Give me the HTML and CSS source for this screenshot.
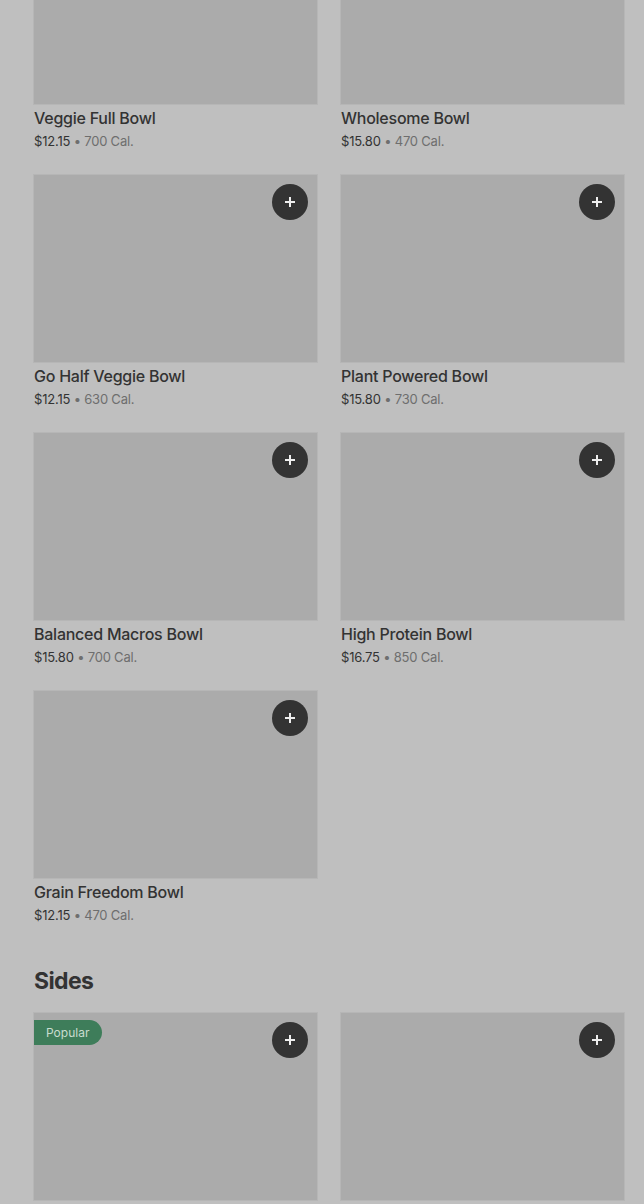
FILE: index.html
```html
<!DOCTYPE html>
<html>
<head>
<meta charset="utf-8">
<link rel="stylesheet" href="styles.css">
</head>
<body>
<main class="page">
  <section class="grid first">
    <article class="card">
      <div class="thumb"></div>
      <h3 class="name">Veggie Full Bowl</h3>
      <p class="meta"><span class="price">$12.15</span> • 700 Cal.</p>
    </article>
    <article class="card">
      <div class="thumb"></div>
      <h3 class="name">Wholesome Bowl</h3>
      <p class="meta"><span class="price">$15.80</span> • 470 Cal.</p>
    </article>
    <article class="card">
      <div class="thumb"><button class="add"><svg viewBox="0 0 12 12" width="12" height="12"><path d="M6 1v10M1 6h10" stroke="currentColor" stroke-width="2"/></svg></button></div>
      <h3 class="name">Go Half Veggie Bowl</h3>
      <p class="meta"><span class="price">$12.15</span> • 630 Cal.</p>
    </article>
    <article class="card">
      <div class="thumb"><button class="add"><svg viewBox="0 0 12 12" width="12" height="12"><path d="M6 1v10M1 6h10" stroke="currentColor" stroke-width="2"/></svg></button></div>
      <h3 class="name">Plant Powered Bowl</h3>
      <p class="meta"><span class="price">$15.80</span> • 730 Cal.</p>
    </article>
    <article class="card">
      <div class="thumb"><button class="add"><svg viewBox="0 0 12 12" width="12" height="12"><path d="M6 1v10M1 6h10" stroke="currentColor" stroke-width="2"/></svg></button></div>
      <h3 class="name">Balanced Macros Bowl</h3>
      <p class="meta"><span class="price">$15.80</span> • 700 Cal.</p>
    </article>
    <article class="card">
      <div class="thumb"><button class="add"><svg viewBox="0 0 12 12" width="12" height="12"><path d="M6 1v10M1 6h10" stroke="currentColor" stroke-width="2"/></svg></button></div>
      <h3 class="name">High Protein Bowl</h3>
      <p class="meta"><span class="price">$16.75</span> • 850 Cal.</p>
    </article>
    <article class="card">
      <div class="thumb"><button class="add"><svg viewBox="0 0 12 12" width="12" height="12"><path d="M6 1v10M1 6h10" stroke="currentColor" stroke-width="2"/></svg></button></div>
      <h3 class="name">Grain Freedom Bowl</h3>
      <p class="meta"><span class="price">$12.15</span> • 470 Cal.</p>
    </article>
  </section>

  <h2 class="section-title">Sides</h2>

  <section class="grid">
    <article class="card">
      <div class="thumb"><span class="badge">Popular</span><button class="add"><svg viewBox="0 0 12 12" width="12" height="12"><path d="M6 1v10M1 6h10" stroke="currentColor" stroke-width="2"/></svg></button></div>
    </article>
    <article class="card">
      <div class="thumb"><button class="add"><svg viewBox="0 0 12 12" width="12" height="12"><path d="M6 1v10M1 6h10" stroke="currentColor" stroke-width="2"/></svg></button></div>
    </article>
  </section>
</main>
</body>
</html>
```

FILE: styles.css
```css
html, body {
  margin: 0;
  padding: 0;
  background: #bfbfbf;
  height: 1204px;
  overflow: hidden;
}
body {
  font-family: Inter, "Noto Sans", sans-serif;
  color: #333333;
}
.page {
  padding: 0 20px 0 34px;
}
.grid {
  display: grid;
  grid-template-columns: 283px 283px;
  column-gap: 24px;
  row-gap: 24px;
}
.grid.first {
  margin-top: -83px;
}
.card {
  display: flex;
  flex-direction: column;
}
.thumb {
  position: relative;
  height: 187px;
  background: #ababab;
  box-shadow: 0 0 0 1px #b6b6b6;
}
.add {
  position: absolute;
  top: 9px;
  right: 9px;
  width: 36px;
  height: 36px;
  border-radius: 50%;
  border: none;
  padding: 0;
  background: #333333;
  color: #eeeeee;
  display: flex;
  align-items: center;
  justify-content: center;
}
.badge {
  position: absolute;
  top: 7px;
  left: 0;
  height: 25px;
  line-height: 25px;
  padding: 0 13px 0 12px;
  background: #3e7d5a;
  color: #c9dccf;
  font-size: 12px;
  border-radius: 0 13px 13px 0;
}
.name {
  margin: 2px 0 0;
  font-size: 16px;
  line-height: 24px;
  font-weight: 500;
  color: #333333;
  letter-spacing: -0.25px;
}
.meta {
  margin: 1px 0 0;
  font-size: 13px;
  line-height: 20px;
  color: #6e6e6e;
  letter-spacing: -0.2px;
}
.price {
  color: #333333;
}
.section-title {
  margin: 40px 0 16px;
  font-size: 23px;
  line-height: 32px;
  font-weight: 700;
  color: #333333;
  letter-spacing: -0.6px;
}
```
